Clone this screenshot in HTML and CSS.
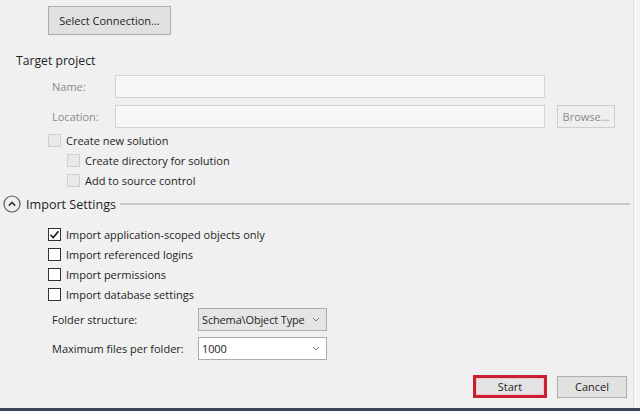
FILE: index.html
```html
<!DOCTYPE html>
<html>
<head>
<meta charset="utf-8">
<link rel="stylesheet" href="styles.css">
</head>
<body>
<div class="window">
  <div class="main">
    <div class="conn-row">
      <button class="btn btn-conn">Select Connection...</button>
    </div>

    <div class="section-title">Target project</div>

    <div class="field-row first">
      <span class="lbl disabled">Name:</span>
      <div class="input"></div>
    </div>
    <div class="field-row">
      <span class="lbl disabled">Location:</span>
      <div class="input"></div>
      <button class="btn btn-browse">Browse...</button>
    </div>

    <div class="checks target-checks">
      <div class="check disabled"><span class="box"></span><span>Create new solution</span></div>
      <div class="check disabled indent"><span class="box"></span><span>Create directory for solution</span></div>
      <div class="check disabled indent"><span class="box"></span><span>Add to source control</span></div>
    </div>

    <div class="group-header">
      <svg class="collapse" width="18" height="18" viewBox="0 0 18 18">
        <circle cx="9" cy="9" r="8" fill="none" stroke="#5a5a5a" stroke-width="1.2"/>
        <path d="M5.8 10.6 L9 7.4 L12.2 10.6" fill="none" stroke="#333" stroke-width="1.5"/>
      </svg>
      <span class="group-title">Import Settings</span>
      <span class="group-line"></span>
    </div>

    <div class="checks import-checks">
      <div class="check"><span class="box checked"><svg width="11" height="11" viewBox="0 0 11 11"><path d="M1.5 5.8 L4.2 8.5 L9.5 2.2" fill="none" stroke="#1a1a1a" stroke-width="1.6"/></svg></span><span>Import application-scoped objects only</span></div>
      <div class="check"><span class="box"></span><span>Import referenced logins</span></div>
      <div class="check"><span class="box"></span><span>Import permissions</span></div>
      <div class="check"><span class="box"></span><span>Import database settings</span></div>
    </div>

    <div class="combo-row first">
      <span class="lbl">Folder structure:</span>
      <div class="combo gray"><span class="combo-text">Schema\Object Type</span><svg width="8" height="5" viewBox="0 0 8 5"><path d="M1 1 L4 4 L7 1" fill="none" stroke="#777" stroke-width="1"/></svg></div>
    </div>
    <div class="combo-row">
      <span class="lbl">Maximum files per folder:</span>
      <div class="combo"><span class="combo-text">1000</span><svg width="8" height="5" viewBox="0 0 8 5"><path d="M1 1 L4 4 L7 1" fill="none" stroke="#777" stroke-width="1"/></svg></div>
    </div>

    <div class="footer">
      <div class="highlight"><button class="btn btn-start">Start</button></div>
      <button class="btn btn-cancel">Cancel</button>
    </div>
  </div>
  <div class="side"></div>
</div>
</body>
</html>
```

FILE: styles.css
```css
* { box-sizing: border-box; }
html, body { margin: 0; padding: 0; }
body {
  width: 640px;
  height: 411px;
  overflow: hidden;
  background: #f0f0f0;
  font-family: "Open Sans", "Noto Sans", sans-serif;
  font-size: 11px;
  color: #1e1e1e;
  white-space: nowrap;
}
.window {
  display: flex;
  width: 640px;
  height: 411px;
  border-bottom: 3px solid #3a4655;
}
.main {
  flex: 1;
  display: flex;
  flex-direction: column;
  background: #f0f0f0;
}
.side {
  width: 7px;
  border-left: 1px solid #e2e2e2;
  background: #f6f6f6;
}
.btn {
  font-family: inherit;
  font-size: 11px;
  color: #1e1e1e;
  background: #e1e1e1;
  border: 1px solid #adadad;
  padding: 0;
  margin: 0;
}
.conn-row { padding: 6px 0 0 48px; }
.btn-conn { width: 123px; height: 29px; }

.section-title {
  margin: 17px 0 0 16px;
  font-size: 12.2px;
  line-height: 18px;
}

.field-row {
  display: flex;
  align-items: center;
  padding-left: 52px;
  margin-top: 7px;
  height: 23px;
}
.field-row.first { margin-top: 5px; }
.lbl { width: 63px; flex: none; }
.disabled { color: #8a8a8a; }
.input {
  width: 430px;
  height: 23px;
  background: #f7f7f7;
  border: 1px solid #d4d4d4;
}
.btn-browse {
  width: 58px;
  height: 23px;
  margin-left: 12px;
  color: #8a8a8a;
  background: #efefef;
  border-color: #cfcfcf;
}

.checks { display: flex; flex-direction: column; padding-left: 48px; }
.target-checks { margin-top: 2px; }
.check {
  display: flex;
  align-items: center;
  height: 20px;
}
.check.indent { padding-left: 19px; }
.box {
  width: 13px;
  height: 13px;
  border: 1px solid #333;
  background: #fff;
  margin-right: 5px;
  flex: none;
  display: flex;
  align-items: center;
  justify-content: center;
}
.check.disabled .box {
  border-color: #d0d0d0;
  background: #e9e9e9;
}
.check.disabled { color: #1e1e1e; }

.group-header {
  display: flex;
  align-items: center;
  height: 20px;
  margin-top: 4px;
  padding-left: 3px;
}
.collapse { flex: none; }
.group-title {
  font-size: 12.6px;
  margin-left: 5px;
  margin-right: 4px;
}
.group-line {
  flex: 1;
  height: 2px;
  background: #c9c9c9;
  margin-right: 3px;
}
.import-checks { margin-top: 10px; }

.combo-row {
  display: flex;
  align-items: center;
  padding-left: 52px;
  margin-top: 6px;
  height: 23px;
}
.combo-row.first { margin-top: 4px; }
.combo-row .lbl { width: 146px; }
.combo {
  width: 129px;
  height: 23px;
  border: 1px solid #acacac;
  background: #fff;
  display: flex;
  align-items: center;
  justify-content: space-between;
  padding: 0 6px 0 3px;
}
.combo-text { letter-spacing: -0.15px; }
.combo.gray { background: #e5e5e5; }

.footer {
  margin-top: auto;
  margin-bottom: 10px;
  display: flex;
  align-items: center;
  justify-content: flex-end;
  padding-right: 6px;
}
.highlight {
  border: 3px solid #c8202f;
  width: 74px;
  height: 23px;
  display: flex;
}
.btn-start {
  flex: 1;
  border: 1px solid #f2c4c8;
  background: #e4e4e4;
}
.btn-cancel {
  width: 70px;
  height: 22px;
  margin-left: 10px;
}
```
